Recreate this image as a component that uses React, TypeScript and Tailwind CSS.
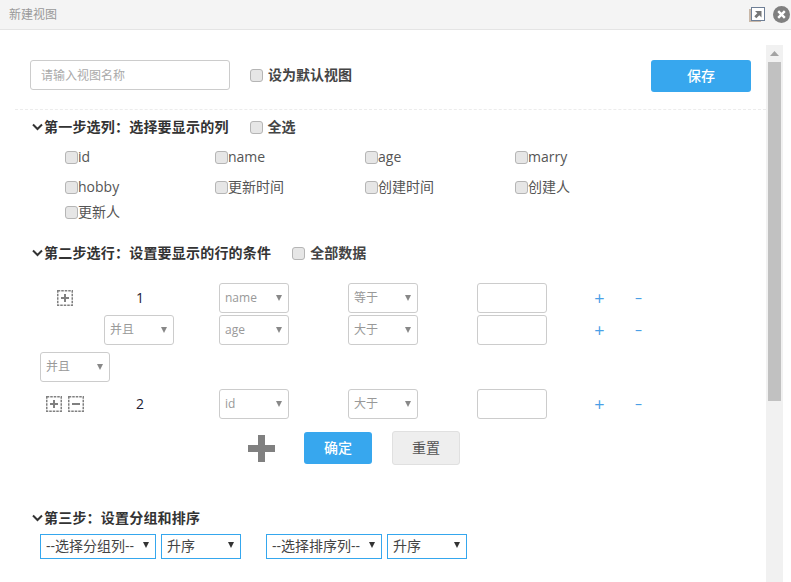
import { ReactNode } from "react";

const FONT = "font-['Open_Sans','Noto_Sans_CJK_SC',sans-serif]";

function Check({ className = "" }: { className?: string }) {
  return (
    <input
      type="checkbox"
      className={`appearance-none shrink-0 w-[13px] h-[13px] rounded-[3px] border border-[#b5b5b5] bg-[#e6e6e6] ${className}`}
    />
  );
}

function Heading({ children, check }: { children: ReactNode; check?: string }) {
  return (
    <div className="flex items-center h-5 pl-[31px]">
      <svg width="13" height="8" viewBox="0 0 13 8" className="shrink-0">
        <path d="M2 1.5 6.5 6 11 1.5" fill="none" stroke="#333" strokeWidth="2" />
      </svg>
      <h3 className="text-sm font-bold text-[#333] tracking-[0.2px] whitespace-nowrap">{children}</h3>
      {check && (
        <label className="flex items-center gap-[5px] ml-[21px] text-sm font-bold text-[#444]">
          <Check />
          {check}
        </label>
      )}
    </div>
  );
}

function ColumnCheck({ label }: { label: string }) {
  return (
    <label className="flex items-center text-sm text-[#555]">
      <Check />
      {label}
    </label>
  );
}

function Select({ value, className = "" }: { value: string; className?: string }) {
  return (
    <div className={`relative w-[70px] h-[30px] ${className}`}>
      <select className="appearance-none w-full h-full pl-[5px] rounded-[3px] border border-[#ccc] bg-white text-xs text-[#999] outline-none">
        <option>{value}</option>
      </select>
      <svg width="6" height="6" viewBox="0 0 6 6" className="absolute right-[7px] top-[12px] pointer-events-none">
        <path d="M0 0h6L3 6z" fill="#888" />
      </svg>
    </div>
  );
}

function BlueSelect({ value, width }: { value: string; width: string }) {
  return (
    <div className={`relative h-[25px] ${width}`}>
      <select className="appearance-none w-full h-full pl-[5px] border border-[#35a7ee] bg-white text-sm text-[#444] outline-none">
        <option>{value}</option>
      </select>
      <svg width="6" height="6" viewBox="0 0 6 6" className="absolute right-[7px] top-[9px] pointer-events-none">
        <path d="M0 0h6L3 6z" fill="#333" />
      </svg>
    </div>
  );
}

function TreeIcon({ minus }: { minus?: boolean }) {
  return (
    <svg width="16" height="16" viewBox="0 0 16 16">
      <rect x="0.75" y="0.75" width="14.5" height="14.5" fill="none" stroke="#808080" strokeWidth="1.5" strokeDasharray="2.5 1" />
      <path d={minus ? "M4 8h8" : "M4 8h8M8 4v8"} stroke="#808080" strokeWidth="2" />
    </svg>
  );
}

function ConditionRow({ lead, field, op }: { lead: ReactNode; field: string; op: string }) {
  return (
    <div className="flex items-center h-[30px]">
      {lead}
      <Select value={field} className="ml-[45px]" />
      <Select value={op} className="ml-[59px]" />
      <input className="ml-[59px] w-[70px] h-[30px] rounded-[3px] border border-[#ccc] bg-white" />
      <span className="w-[15px] ml-[45px] text-center text-lg leading-none text-[#4a9fe6]">+</span>
      <span className="w-[15px] ml-[24px] text-center text-sm leading-none text-[#4a9fe6]">–</span>
    </div>
  );
}

function NumberLead({ icons, n }: { icons: ReactNode; n: number }) {
  return (
    <>
      <div className="w-[60px] ml-[35px] flex justify-center gap-[6px]">{icons}</div>
      <div className="w-[70px] ml-[9px] pl-[2px] text-center text-sm text-[#223]">{n}</div>
    </>
  );
}

const columns = ["id", "name", "age", "marry", "hobby", "更新时间", "创建时间", "创建人", "更新人"];

export default function App() {
  return (
    <div className={`w-[791px] h-[582px] overflow-hidden bg-white flex flex-col ${FONT}`}>
      <header className="h-[30px] shrink-0 flex items-center justify-between bg-[#f4f4f4] border-b border-[#e4e4e4] pl-[9px] pr-[1px]">
        <span className="text-xs text-[#999]">新建视图</span>
        <div className="flex items-center gap-[8px]">
          <svg width="16" height="15" viewBox="0 0 16 15">
            <rect x="0" y="2" width="12" height="13" fill="#c9b8a8" />
            <rect x="2.5" y="0.5" width="13" height="13" fill="#fff" stroke="#6f7f96" />
            <path d="M6 4h6.5v6.5l-2.2-2.2-3 3-2-2 3-3z" fill="#777" />
          </svg>
          <svg width="17" height="17" viewBox="0 0 17 17">
            <circle cx="8.5" cy="8.5" r="8.5" fill="#808080" />
            <path d="M5.2 5.2l6.6 6.6M11.8 5.2l-6.6 6.6" stroke="#fff" strokeWidth="2.4" />
          </svg>
        </div>
      </header>

      <div className="flex-1 flex min-h-0">
        <main className="w-[766px] shrink-0">
          <div className="flex items-start ml-[15px] pl-[15px] pt-[30px] h-[80px] border-b border-dashed border-[#ececec]">
            <input
              placeholder="请输入视图名称"
              className="w-[200px] h-[30px] px-[10px] rounded-[3px] border border-[#ccc] text-xs placeholder:text-[#aaa] outline-none"
            />
            <label className="flex items-center gap-[5px] ml-[20px] h-[30px] text-sm font-bold text-[#444]">
              <Check />
              设为默认视图
            </label>
            <button className="ml-auto mr-[15px] w-[100px] h-8 rounded-[3px] bg-[#37a7ee] text-sm font-medium text-white">保存</button>
          </div>

          <div className="mt-[7px]">
            <Heading check="全选">第一步选列：选择要显示的列</Heading>
          </div>
          <div className="grid grid-cols-[repeat(4,150px)] grid-rows-[30px_25px_25px] items-start pl-[65px] mt-[10px]">
            {columns.map((c) => (
              <ColumnCheck key={c} label={c} />
            ))}
          </div>

          <div className="mt-[16px]">
            <Heading check="全部数据">第二步选行：设置要显示的行的条件</Heading>
          </div>

          <div className="mt-[20px]">
            <ConditionRow lead={<NumberLead n={1} icons={<TreeIcon />} />} field="name" op="等于" />
            <div className="mt-[2px]">
              <ConditionRow lead={<Select value="并且" className="ml-[104px]" />} field="age" op="大于" />
            </div>
            <Select value="并且" className="ml-[40px] mt-[7px]" />
            <div className="mt-[7px]">
              <ConditionRow
                lead={<NumberLead n={2} icons={<><TreeIcon /><TreeIcon minus /></>} />}
                field="id"
                op="大于"
              />
            </div>
          </div>

          <div className="flex items-center h-[34px] mt-[12px] pl-[248px]">
            <svg width="27" height="27" viewBox="0 0 27 27">
              <path d="M10 0h7v10h10v7H17v10h-7V17H0v-7h10z" fill="#808080" />
            </svg>
            <button className="ml-[29px] w-[68px] h-8 rounded-[3px] bg-[#37a7ee] text-sm font-medium text-white">确定</button>
            <button className="ml-[20px] w-[68px] h-[34px] rounded-[3px] border border-[#e0e0e0] bg-[#eee] text-sm text-[#555]">重置</button>
          </div>

          <div className="mt-[43px]">
            <Heading>第三步：设置分组和排序</Heading>
          </div>
          <div className="flex items-center pl-[40px] mt-[5px]">
            <BlueSelect value="--选择分组列--" width="w-[116px]" />
            <div className="ml-[5px]"><BlueSelect value="升序" width="w-[80px]" /></div>
            <div className="ml-[25px]"><BlueSelect value="--选择排序列--" width="w-[116px]" /></div>
            <div className="ml-[5px]"><BlueSelect value="升序" width="w-[80px]" /></div>
          </div>
        </main>

        <aside className="w-[17px] mt-[15px] bg-[#f1f1f1] flex flex-col items-center">
          <svg width="9" height="5" viewBox="0 0 9 5" className="mt-[6px] mb-[6px]">
            <path d="M0 5h9L4.5 0z" fill="#a3a3a3" />
          </svg>
          <div className="w-[13px] h-[339px] bg-[#c1c1c1]" />
        </aside>
      </div>
    </div>
  );
}
